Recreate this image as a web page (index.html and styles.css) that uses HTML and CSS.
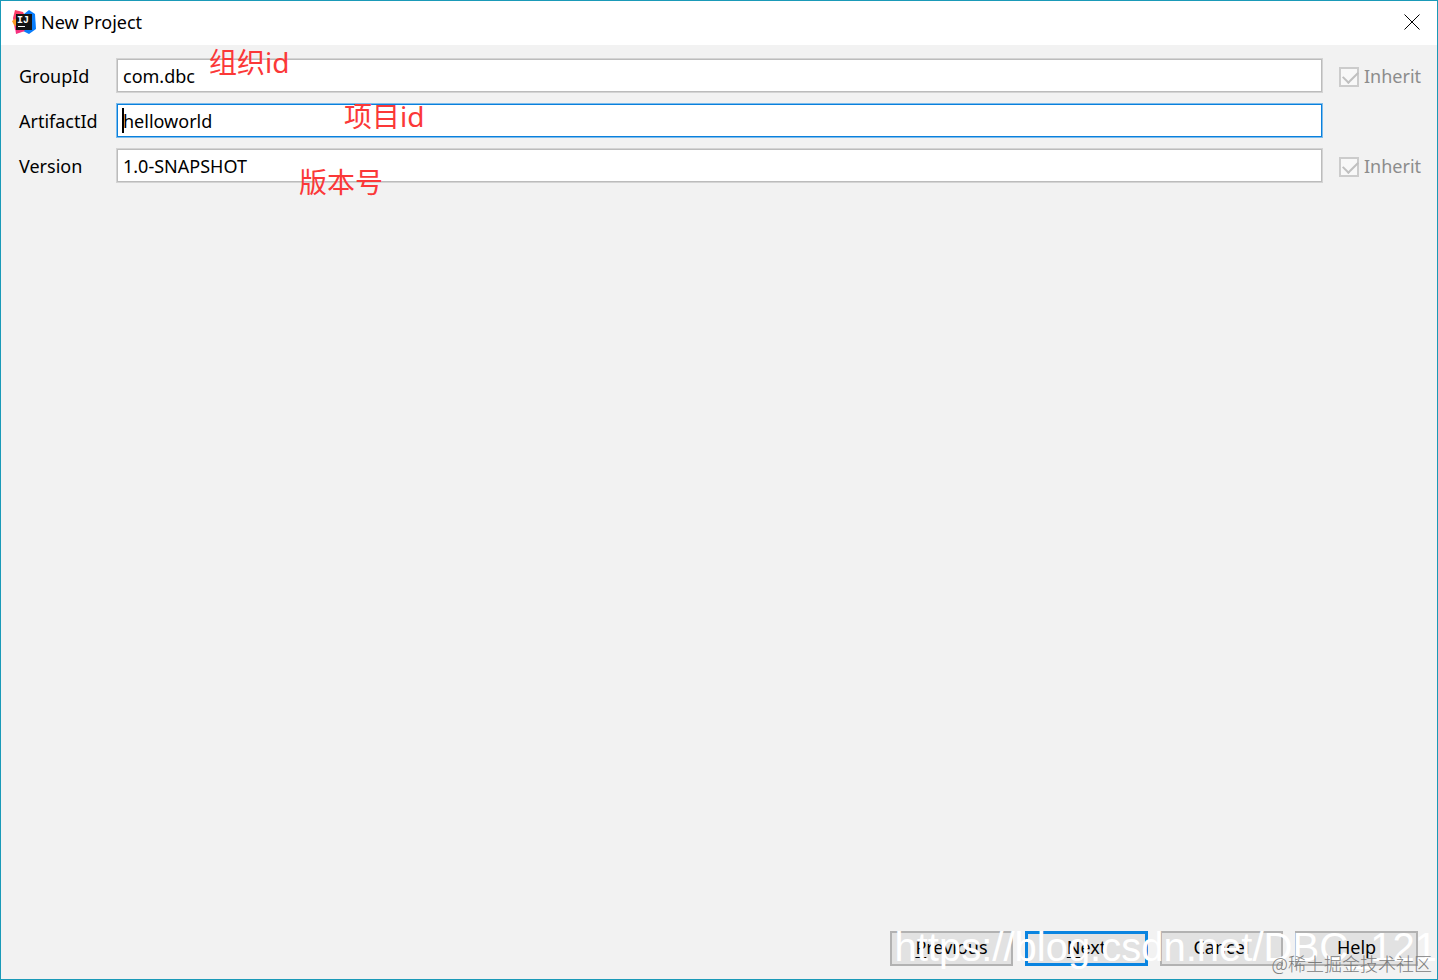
FILE: index.html
```
<!DOCTYPE html>
<html lang="zh-CN">
<head>
  <meta charset="UTF-8">
  <meta name="viewport" content="width=device-width, initial-scale=1.0">
  <title>New Project</title>
  <link rel="stylesheet" href="styles.css">
</head>
<body>
  <div class="window">
    <header class="titlebar">
      <svg class="logo" viewBox="0 0 24 24" aria-hidden="true">
        <path d="M3 0 L11 2 L13 6 L9 20 L3 20 L1 8 Z" fill="#fb3e68"/>
        <path d="M0 11 L5 8 L6 17 L2 15 Z" fill="#fb9a23"/>
        <path d="M12 4 L17 0 L23 4 L24 19 L17 24 L9 20 Z" fill="#087cfa"/>
        <path d="M3 17 L11 19 L13 21 L4 24 Z" fill="#f5317f"/>
        <rect x="4" y="4" width="16" height="16" fill="#141414"/>
        <text class="logo-text" x="5" y="13">IJ</text>
        <rect x="6" y="16" width="7" height="1" fill="#fff"/>
      </svg>
      <h1>New Project</h1>
      <button class="close" type="button" aria-label="Close">
        <svg viewBox="0 0 16 16"><path d="M.5 .5 L15.5 15.5 M15.5 .5 L.5 15.5"/></svg>
      </button>
    </header>

    <main class="form">
      <label for="groupId">GroupId</label>
      <div class="field">
        <input type="text" id="groupId" value="com.dbc">
        <span class="note note-group">组织id</span>
      </div>
      <label class="inherit"><input type="checkbox" checked disabled>Inherit</label>

      <label for="artifactId">ArtifactId</label>
      <div class="field active">
        <input type="text" id="artifactId" value="helloworld">
        <span class="caret"></span>
        <span class="note note-artifact">项目id</span>
      </div>
      <span></span>

      <label for="version">Version</label>
      <div class="field">
        <input type="text" id="version" value="1.0-SNAPSHOT">
        <span class="note note-version">版本号</span>
      </div>
      <label class="inherit"><input type="checkbox" checked disabled>Inherit</label>
    </main>

    <footer class="actions">
      <button type="button"><u>P</u>revious</button>
      <button type="button" class="default"><u>N</u>ext</button>
      <button type="button">Cancel</button>
      <button type="button">Help</button>
    </footer>

    <div class="mark mark-url">https://blog.csdn.net/DBC_121</div>
    <div class="mark mark-site">@稀土掘金技术社区</div>
  </div>
</body>
</html>
```

FILE: styles.css
```
* {
  box-sizing: border-box;
}
body {
  margin: 0;
  font-family: "Noto Sans", "Noto Sans CJK SC", sans-serif;
  font-size: 18px;
  line-height: 24px;
  color: #000;
}
.window {
  position: relative;
  display: flex;
  flex-direction: column;
  min-height: 100vh;
  border: 1px solid #1a9ab8;
  background: #f2f2f2;
  overflow: hidden;
}

/* title bar */
.titlebar {
  display: flex;
  align-items: center;
  gap: 5px;
  height: 44px;
  padding: 0 17px 2px 11px;
  background: #fff;
}
.titlebar h1 {
  margin: 0;
  font-size: 18px;
  font-weight: 400;
}
.logo {
  width: 24px;
  height: 24px;
}
.logo-text {
  font: bold 10px "Liberation Mono", monospace;
  fill: #fff;
}
.close {
  display: flex;
  margin-left: auto;
  padding: 0;
  border: none;
  background: none;
}
.close svg {
  width: 16px;
  height: 16px;
  fill: none;
  stroke: #000;
}

/* form */
.form {
  display: grid;
  grid-template-columns: 81px 1fr 81px;
  column-gap: 16px;
  row-gap: 10px;
  align-items: center;
  padding: 13px 17px 0 18px;
}
.field {
  position: relative;
  display: flex;
}
.field input {
  width: 100%;
  height: 35px;
  padding: 0 6px;
  border: 1px solid #d4d4d4;
  border-radius: 0;
  outline: none;
  background: #fff;
  box-shadow: inset 0 0 0 1px #bcbcbc;
  font: inherit;
  color: #000;
}
.field.active input {
  border-color: #7dbcec;
  box-shadow: inset 0 0 0 1px #0a80dc;
}
.caret {
  position: absolute;
  left: 6px;
  top: 5px;
  width: 2px;
  height: 25px;
  background: #000;
}
.inherit {
  display: flex;
  align-items: center;
  gap: 5px;
  color: #8c8c8c;
}
.inherit input {
  appearance: none;
  flex: none;
  position: relative;
  width: 20px;
  height: 20px;
  margin: 3px 0 0;
  border: 2px solid #cccccc;
  background: #f8f8f8;
}
.inherit input:checked::after {
  content: "";
  position: absolute;
  left: 2px;
  top: 2px;
  width: 13px;
  height: 7px;
  border: solid #c0c0c0;
  border-width: 0 0 2px 2px;
  transform: rotate(-45deg);
}

/* red notes */
.note {
  position: absolute;
  font-size: 28px;
  line-height: 36px;
  color: #fb3838;
  white-space: nowrap;
  pointer-events: none;
}
.note-group {
  left: 93px;
  top: -14px;
}
.note-artifact {
  left: 228px;
  top: -5px;
}
.note-version {
  left: 183px;
  top: 16px;
}

/* buttons */
.actions {
  display: flex;
  justify-content: flex-end;
  gap: 12px;
  margin-top: auto;
  padding: 0 19px 13px;
}
.actions button {
  width: 123px;
  height: 35px;
  padding: 0 0 4px;
  border: 2px solid #b2b2b2;
  background: #e2e2e2;
  font: inherit;
  color: #000;
}
.actions .default {
  border: 3px solid #0a84e0;
}
.actions u {
  text-underline-offset: 3px;
}

/* watermarks */
.mark {
  position: absolute;
  white-space: nowrap;
  pointer-events: none;
}
.mark-url {
  right: 0;
  bottom: 9px;
  font-family: "Liberation Sans", sans-serif;
  font-size: 40px;
  line-height: 46px;
  color: #fff;
}
.mark-site {
  right: 5px;
  bottom: 4px;
  font-family: "Noto Sans CJK SC", sans-serif;
  font-size: 18px;
  font-weight: 300;
  color: #7c7c7c;
}
```
